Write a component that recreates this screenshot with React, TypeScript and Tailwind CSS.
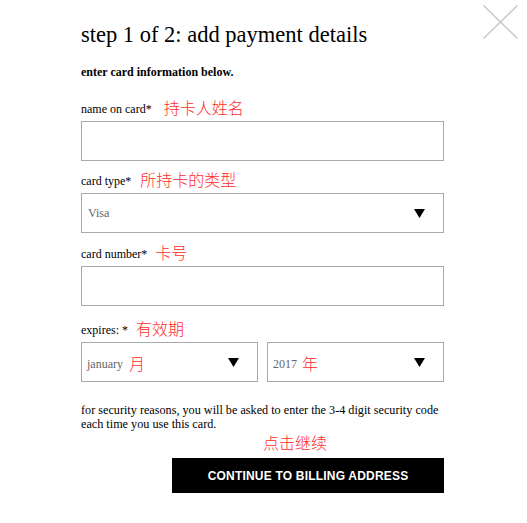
import React from "react";

const Tri = () => (
  <svg width="11" height="9" viewBox="0 0 11 9" className="shrink-0">
    <polygon points="0,0 11,0 5.5,9" fill="#000" />
  </svg>
);

const Note = ({ children, cls = "" }: { children: React.ReactNode; cls?: string }) => (
  <span className={`font-['Noto_Sans_CJK_SC',sans-serif] font-light text-[16px] leading-[18px] text-[#ff2b2b] ${cls}`}>{children}</span>
);

const Label = ({ text, note, noteCls = "ml-[10px]" }: { text: string; note: string; noteCls?: string }) => (
  <div className="flex items-baseline h-[18px] mb-[6px]">
    <span className="text-[12px] text-black">{text}</span>
    <Note cls={`relative top-[1px] ${noteCls}`}>{note}</Note>
  </div>
);

export default function App() {
  return (
    <div className="relative w-[527px] h-[523px] bg-white font-['Liberation_Serif',serif] text-black overflow-hidden">
      <svg className="absolute left-[483px] top-[5px]" width="35" height="34" viewBox="0 0 35 34">
        <line x1="0.5" y1="0.5" x2="34.5" y2="33.5" stroke="#c8c8c8" strokeWidth="1.5" />
        <line x1="34.5" y1="0.5" x2="0.5" y2="33.5" stroke="#c8c8c8" strokeWidth="1.5" />
      </svg>
      <div className="pl-[81px] pt-[23px] w-[444px] flex flex-col">
        <h1 className="text-[22.5px] leading-[24px] font-normal whitespace-nowrap">step 1 of 2: add payment details</h1>
        <p className="mt-[19px] text-[12px] leading-[12px] font-bold whitespace-nowrap">enter card information below.</p>

        <div className="mt-[19px]">
          <Label text="name on card*" note="持卡人姓名" noteCls="ml-[12px]" />
          <div className="h-[40px] border border-[#a9a9a9]" />
        </div>

        <div className="mt-[8px]">
          <Label text="card type*" note="所持卡的类型" noteCls="ml-[9px]" />
          <div className="h-[40px] border border-[#a9a9a9] flex items-center justify-between pl-[6px] pr-[18px]">
            <span className="text-[12px] text-[#666]">Visa</span>
            <Tri />
          </div>
        </div>

        <div className="mt-[9px]">
          <Label text="card number*" note="卡号" noteCls="ml-[8px]" />
          <div className="h-[40px] border border-[#a9a9a9]" />
        </div>

        <div className="mt-[12px]">
          <Label text="expires: *" note="有效期" noteCls="ml-[8px]" />
          <div className="flex gap-[9px]">
            <div className="w-[178px] h-[40px] border border-[#a9a9a9] flex items-center justify-between pl-[5px] pr-[18px]">
              <span className="flex items-baseline">
                <span className="text-[12px] text-[#666]">january</span>
                <Note cls="ml-[6px] relative top-[2px]">月</Note>
              </span>
              <Tri />
            </div>
            <div className="w-[178px] h-[40px] border border-[#a9a9a9] flex items-center justify-between pl-[5px] pr-[18px]">
              <span className="flex items-baseline">
                <span className="text-[12px] text-[#666]">2017</span>
                <Note cls="ml-[5px] relative top-[2px]">年</Note>
              </span>
              <Tri />
            </div>
          </div>
        </div>

        <p className="mt-[21px] text-[12.2px] leading-[14px] whitespace-nowrap">
          for security reasons, you will be asked to enter the 3-4 digit security code
          <br />
          each time you use this card.
        </p>

        <div className="mt-[0px] flex justify-center pl-[65px]">
          <Note cls="leading-[22px]">点击继续</Note>
        </div>

        <div className="mt-[5px] flex justify-end">
          <button className="w-[272px] h-[35px] bg-black text-white font-['Liberation_Sans',sans-serif] font-bold text-[12px] tracking-[0.2px]">
            CONTINUE TO BILLING ADDRESS
          </button>
        </div>
      </div>
    </div>
  );
}
